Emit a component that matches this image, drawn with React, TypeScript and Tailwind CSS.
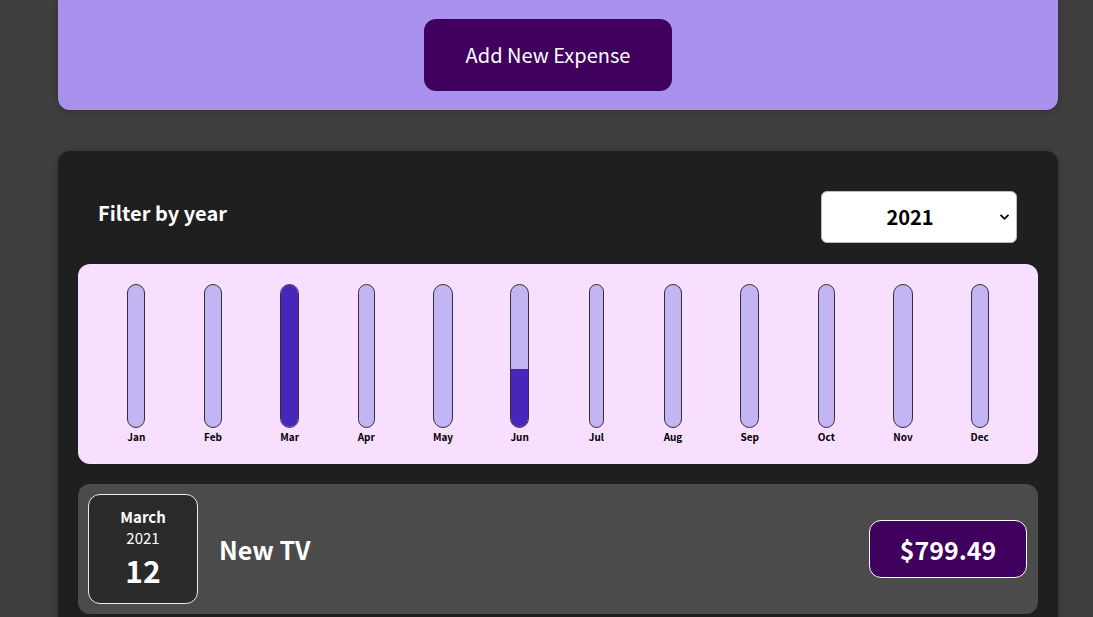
import React from "react";

const months = [
  { label: "Jan", fill: 0 },
  { label: "Feb", fill: 0 },
  { label: "Mar", fill: 100 },
  { label: "Apr", fill: 0 },
  { label: "May", fill: 0 },
  { label: "Jun", fill: 41 },
  { label: "Jul", fill: 0 },
  { label: "Aug", fill: 0 },
  { label: "Sep", fill: 0 },
  { label: "Oct", fill: 0 },
  { label: "Nov", fill: 0 },
  { label: "Dec", fill: 0 },
];

const font = { fontFamily: '"Noto Sans CJK JP", "Noto Sans", sans-serif' };

export default function App() {
  return (
    <div className="min-h-[617px] w-full bg-[#3f3f3f] overflow-hidden" style={font}>
      <div className="ml-[58px] w-[1000px] bg-[#a892ee] rounded-b-[12px] shadow-[0_1px_8px_rgba(0,0,0,0.25)] pt-[19px] pb-[19px] flex justify-start pl-[366px]">
        <button className="w-[248px] h-[72px] rounded-[12px] bg-[#40005d] text-white text-[20px] leading-none">
          Add New Expense
        </button>
      </div>

      <div className="ml-[58px] mt-[41px] w-[1000px] bg-[#1f1f1f] rounded-[12px] shadow-[0_1px_8px_rgba(0,0,0,0.25)] px-[20px] pt-[40px] pb-[20px]">
        <div className="flex justify-between items-start px-[20px]">
          <div className="mt-[8px] text-white font-bold text-[20px] leading-[28px]">Filter by year</div>
          <div className="relative w-[196px] h-[52px] mr-[1px] bg-white border border-[#bbb] rounded-[6px] flex items-center justify-center pr-[18px]">
            <span className="text-black font-bold text-[20px] leading-none">2021</span>
            <svg className="absolute right-[6px] top-[21px]" width="11" height="8" viewBox="0 0 11 8">
              <path d="M1.5 1.8 L5.5 5.8 L9.5 1.8" fill="none" stroke="#000" strokeWidth="1.8" />
            </svg>
          </div>
        </div>

        <div className="mt-[21px] h-[200px] bg-[#f8dfff] rounded-[12px] px-[20px] pt-[20px] grid grid-cols-12">
          {months.map((m) => (
            <div key={m.label} className="flex justify-center">
              <div className="inline-flex flex-col items-stretch">
                <div className="h-[144px] border border-[#313131] rounded-[12px] bg-[#c3b4f3] overflow-hidden flex flex-col justify-end">
                  <div className="bg-[#4826b9] w-full" style={{ height: `${m.fill}%` }} />
                </div>
                <div className="text-center text-[10px] font-bold leading-[18px] text-black">{m.label}</div>
              </div>
            </div>
          ))}
        </div>

        <div className="mt-[20px] h-[130px] bg-[#4b4b4b] rounded-[12px] p-[10px] pr-[11px] flex items-center">
          <div className="w-[110px] h-[110px] bg-[#2a2a2a] border border-[#ececec] rounded-[12px] flex flex-col items-center pt-[13px] text-white">
            <div className="text-[15px] font-bold leading-[18px]">March</div>
            <div className="text-[15px] leading-[20px] mt-[2px]">2021</div>
            <div className="text-[30px] font-bold leading-[36px] mt-[4px]">12</div>
          </div>
          <div className="ml-[21px] flex-1 text-white text-[25px] font-bold leading-none">New TV</div>
          <div className="w-[158px] h-[58px] bg-[#40005d] border border-white rounded-[12px] flex items-center justify-center text-white text-[25px] font-bold leading-none">
            $799.49
          </div>
        </div>
      </div>
    </div>
  );
}
